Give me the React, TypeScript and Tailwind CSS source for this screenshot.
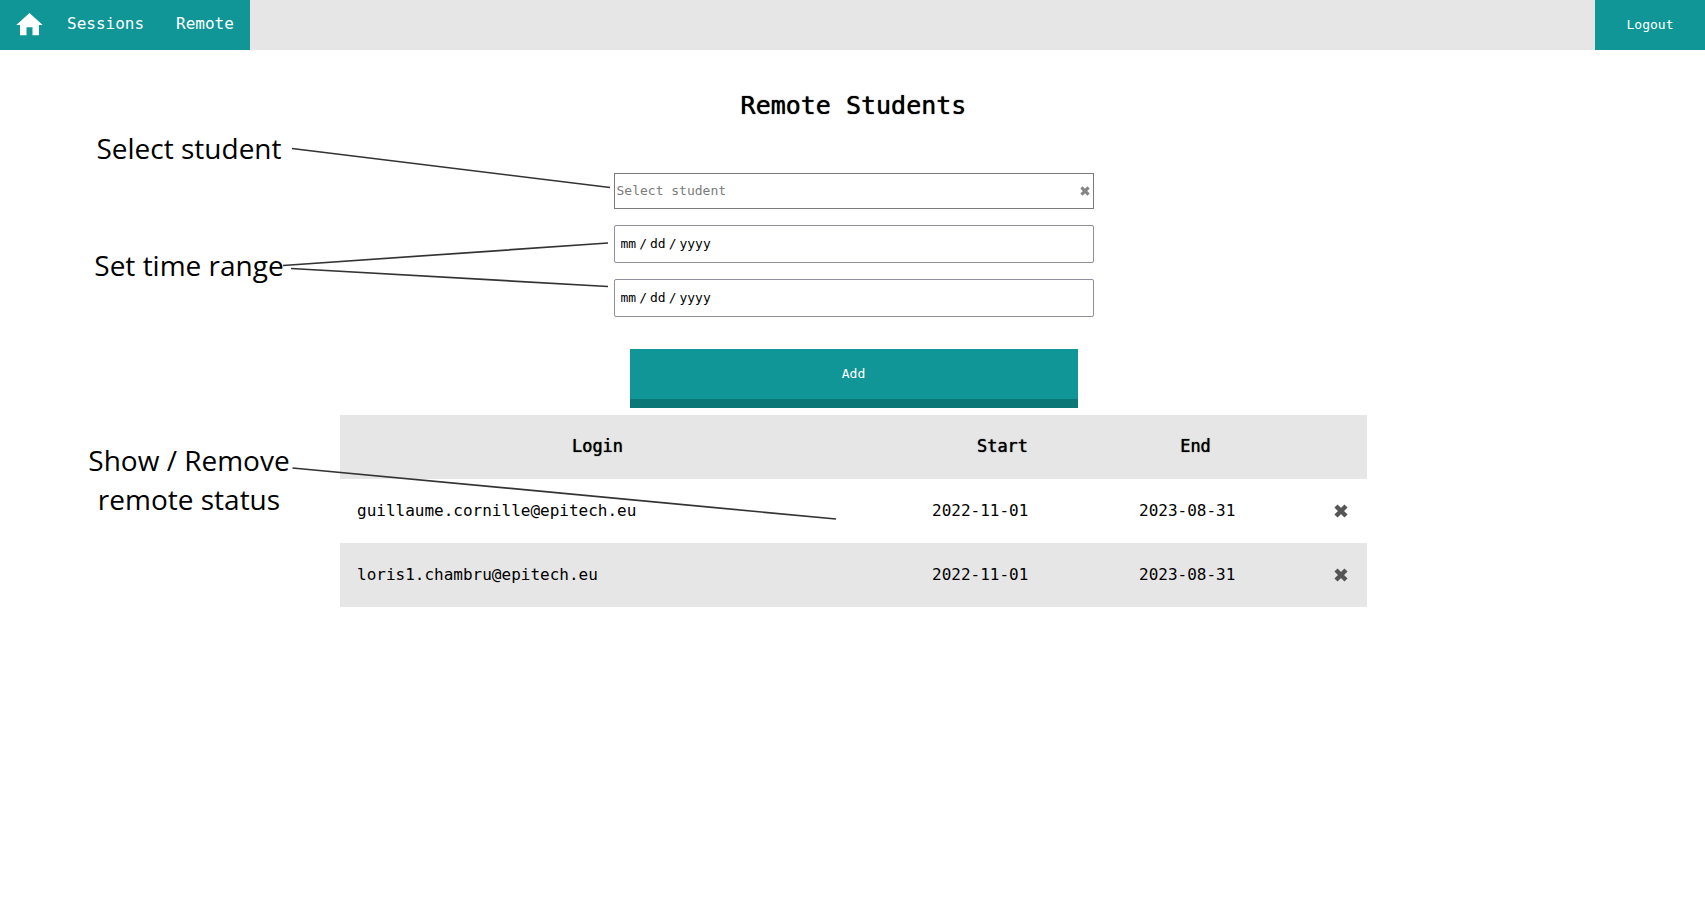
import React from "react";

const rows = [
  { login: "guillaume.cornille@epitech.eu", start: "2022-11-01", end: "2023-08-31" },
  { login: "loris1.chambru@epitech.eu", start: "2022-11-01", end: "2023-08-31" },
];

const dateClass =
  "h-[38px] w-full rounded-xs border border-[#8f8f9d] bg-white px-1.5 text-[13px] text-black outline-none [&::-webkit-calendar-picker-indicator]:hidden [&::-webkit-datetime-edit-text]:px-[3px] [&::-webkit-datetime-edit-month-field]:p-0 [&::-webkit-datetime-edit-day-field]:p-0 [&::-webkit-datetime-edit-year-field]:p-0";

function CrossIcon({ className }: { className: string }) {
  return (
    <svg viewBox="0 0 14 14" className={className} fill="none" stroke="currentColor" strokeWidth="4.4" aria-hidden="true">
      <path d="M2 2 12 12M12 2 2 12" />
    </svg>
  );
}

function NavBar() {
  return (
    <header className="flex h-[50px] justify-between bg-[#e6e6e6]">
      <nav className="flex bg-[#109696] text-base text-white">
        <a href="#home" aria-label="Home" className="flex items-center pr-2 pl-4">
          <svg viewBox="0 0 27 24" className="h-6 w-[27px]" fill="currentColor" aria-hidden="true">
            <path d="M13.500 0 26.700 12H23v10.300h-6.500V14.300h-6v8H4V12H0.300z" />
          </svg>
        </a>
        <a href="#sessions" className="flex items-center px-4 pb-0.5">Sessions</a>
        <a href="#remote" className="flex items-center px-4 pb-0.5">Remote</a>
      </nav>
      <button type="button" className="w-[110px] bg-[#109696] text-[13px] text-white">Logout</button>
    </header>
  );
}

function RemoteForm() {
  return (
    <form className="flex w-[480px] max-w-full flex-col gap-4" onSubmit={(e) => e.preventDefault()}>
      <div className="flex h-9 items-center border border-[#7b7b7b] bg-white pr-[3px] pl-0.5">
        <input
          type="text"
          aria-label="Select student"
          placeholder="Select student"
          className="min-w-0 flex-1 text-[13px] text-black outline-none placeholder:text-[#7b7b7b]"
        />
        <button type="button" aria-label="Clear" className="text-[#858585]">
          <CrossIcon className="size-[10px]" />
        </button>
      </div>
      <input type="date" aria-label="Start date" className={dateClass} />
      <input type="date" aria-label="End date" className={dateClass} />
      <button
        type="submit"
        className="mx-4 mt-4 h-[59px] border-b-[9px] border-[#0c7777] bg-[#109696] text-[13px] text-white"
      >
        Add
      </button>
    </form>
  );
}

function StudentTable() {
  return (
    <table className="mt-[7px] w-[1027px] max-w-full table-fixed text-base text-black">
      <colgroup>
        <col className="w-[575px]" />
        <col className="w-[207px]" />
        <col className="w-[179px]" />
        <col />
      </colgroup>
      <thead>
        <tr className="h-16 bg-[#e6e6e6] text-[17px] [text-shadow:0_0_1px_#000]">
          <th className="pr-[60px] font-normal">Login</th>
          <th className="pr-8 font-normal">Start</th>
          <th className="pr-8 font-normal">End</th>
          <th aria-label="Remove" />
        </tr>
      </thead>
      <tbody>
        {rows.map((r) => (
          <tr key={r.login} className="h-16 even:bg-[#e6e6e6]">
            <td className="px-[17px]">{r.login}</td>
            <td className="px-[17px]">{r.start}</td>
            <td className="px-[17px]">{r.end}</td>
            <td className="pl-3.5">
              <button type="button" aria-label={`Remove ${r.login}`} className="mx-auto block text-[#555]">
                <CrossIcon className="size-[14px]" />
              </button>
            </td>
          </tr>
        ))}
      </tbody>
    </table>
  );
}

function Annotations() {
  return (
    <div className="pointer-events-none absolute inset-0 text-center font-['Open_Sans',sans-serif] text-[28px] leading-[39px] text-black">
      <p className="absolute top-[129px] left-[79px] w-[220px]">Select student</p>
      <p className="absolute top-[246px] left-[79px] w-[220px]">Set time range</p>
      <p className="absolute top-[441px] left-[79px] w-[220px]">
        Show / Remove
        <br />
        remote status
      </p>
      <svg className="absolute top-0 left-0" width="900" height="600" stroke="#333" strokeWidth="1.7" aria-hidden="true">
        <path d="M292 148.500 610 187.500M283 265.500 608 243M291 268.500 608 286.500M292.500 468 836 519" />
      </svg>
    </div>
  );
}

export default function App() {
  return (
    <div className="relative min-h-screen bg-white font-['DejaVu_Sans_Mono',monospace]">
      <NavBar />
      <main className="flex flex-col items-center pl-0.5">
        <h1 className="mt-10 mb-[51px] text-[25px] leading-8 text-black [text-shadow:0_0_1px_#000]">Remote Students</h1>
        <RemoteForm />
        <StudentTable />
      </main>
      <Annotations />
    </div>
  );
}
